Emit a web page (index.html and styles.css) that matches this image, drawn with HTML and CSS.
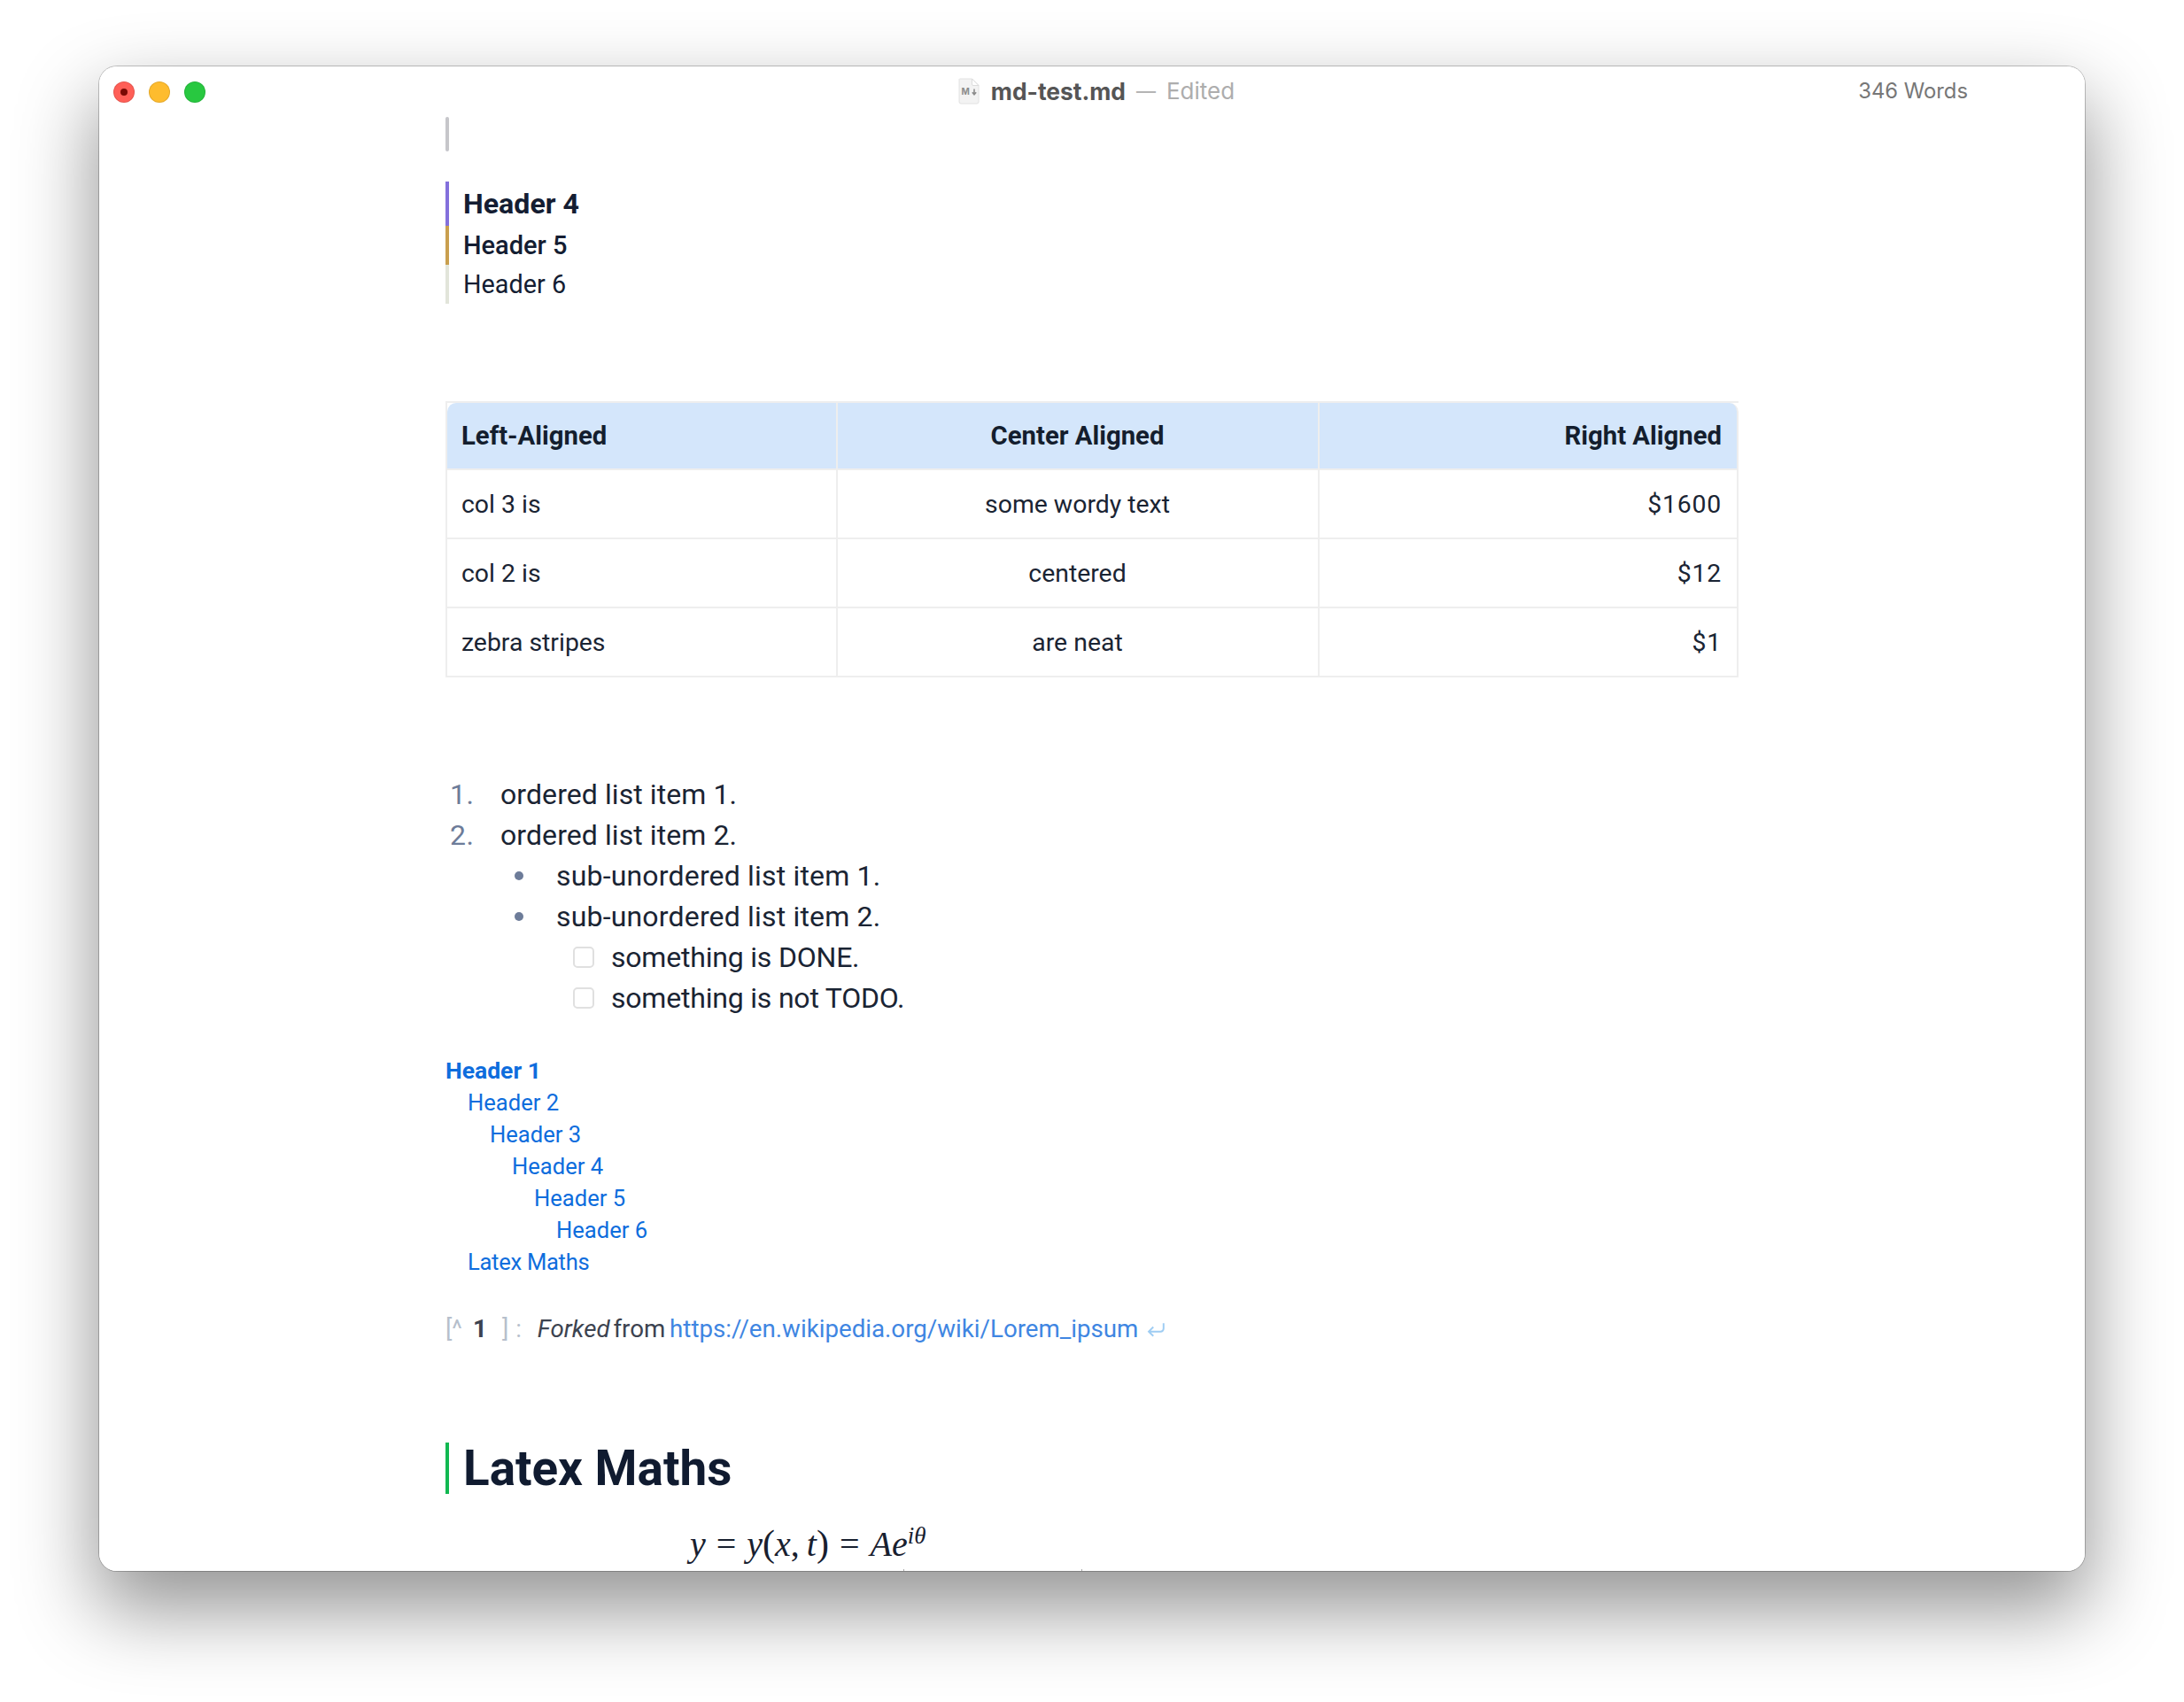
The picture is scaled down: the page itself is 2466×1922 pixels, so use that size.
FILE: index.html
```html
<!DOCTYPE html>
<html lang="en">
<head>
<meta charset="utf-8">
<title>md-test.md</title>
<link rel="stylesheet" href="styles.css">
</head>
<body>
<main class="window">
  <header class="titlebar">
    <div class="lights">
      <span class="light red"><span class="dot"></span></span>
      <span class="light yellow"></span>
      <span class="light green"></span>
    </div>
    <div class="title">
      <svg class="file-icon" width="24" height="30" viewBox="0 0 24 30" aria-hidden="true">
        <path d="M1.5 1h14l7.5 7.5V27a2 2 0 0 1-2 2H3a2 2 0 0 1-2-2V1.500z" fill="#f3f3f3" stroke="#e2e2e2"/>
        <path d="M15.500 1v6a1.500 1.500 0 0 0 1.500 1.500h6z" fill="#fff" stroke="#dcdcdc"/>
        <text x="3.500" y="19" class="file-mark">M</text>
        <path d="M18 12.500v6M15.800 16.300l2.200 2.400 2.200-2.400" fill="none" stroke="#8c8c8c" stroke-width="1.600"/>
      </svg>
      <strong class="name">md-test.md</strong>
      <span class="sep">—</span>
      <span class="state">Edited</span>
    </div>
    <div class="words">346 Words</div>
  </header>

  <article class="doc">
    <div class="cursor-bar"></div>

    <section class="heads">
      <h4 class="h4">Header 4</h4>
      <h5 class="h5">Header 5</h5>
      <h6 class="h6">Header 6</h6>
    </section>

    <table class="table">
      <colgroup><col class="c1"><col class="c2"><col class="c3"></colgroup>
      <thead>
        <tr><th class="l">Left-Aligned</th><th class="m">Center Aligned</th><th class="r">Right Aligned</th></tr>
      </thead>
      <tbody>
        <tr><td class="l">col 3 is</td><td class="m">some wordy text</td><td class="r">$1600</td></tr>
        <tr><td class="l">col 2 is</td><td class="m">centered</td><td class="r">$12</td></tr>
        <tr><td class="l">zebra stripes</td><td class="m">are neat</td><td class="r">$1</td></tr>
      </tbody>
    </table>

    <ol class="ol">
      <li><span class="num">1.</span>ordered list item 1.</li>
      <li><span class="num">2.</span>ordered list item 2.
        <ul class="ul">
          <li><span class="bullet"></span>sub-unordered list item 1.</li>
          <li><span class="bullet"></span>sub-unordered list item 2.
            <ul class="tasks">
              <li><span class="box"></span>something is DONE.</li>
              <li><span class="box"></span>something is not TODO.</li>
            </ul>
          </li>
        </ul>
      </li>
    </ol>

    <nav class="toc">
      <a class="t0">Header 1</a>
      <a class="t1">Header 2</a>
      <a class="t2">Header 3</a>
      <a class="t3">Header 4</a>
      <a class="t4">Header 5</a>
      <a class="t5">Header 6</a>
      <a class="t1 latex">Latex Maths</a>
    </nav>

    <p class="footnote">
      <span class="fn-br">[^</span><b class="fn-num">1</b><span class="fn-br fn-close">]</span><span class="fn-br fn-colon">:</span>
      <em>Forked</em> from <a class="fn-link">https://en.wikipedia.org/wiki/Lorem_ipsum</a>
      <svg class="fn-back" width="20" height="18" viewBox="0 0 20 18" aria-hidden="true"><path d="M18 2v5.500a3 3 0 0 1-3 3H3M7.500 5.800 2.800 10.500l4.700 4.700" fill="none" stroke="#9fcdf3" stroke-width="1.800"/></svg>
    </p>

    <h2 class="h2">Latex Maths</h2>

    <div class="math"><i>y</i><span class="eq">=</span><i>y</i><span class="paren">(</span><i>x</i>,<i class="t">t</i><span class="paren">)</span><span class="eq">=</span><i>Ae</i><sup><i>iθ</i></sup></div>
  </article>
  <span class="tick tick-a"></span>
  <span class="tick tick-b"></span>
</main>
</body>
</html>
```
FILE: styles.css
```css
* { box-sizing: border-box; }
html, body { margin: 0; padding: 0; background: #fff; }
body { height: 1922px; overflow: hidden; padding: 75px 0 0 112px; font-family: "Roboto", "Liberation Sans", sans-serif; color: #18202f; }

.window { position: relative; width: 2242px; height: 1699px; background: #fff; border-radius: 20px; overflow: hidden; }
body::before { content: ""; position: absolute; left: 112px; top: 75px; width: 2242px; height: 1699px; border-radius: 20px; box-shadow: 0 0 0 1px rgba(0,0,0,.22), 0 40px 88px 4px rgba(0,0,0,.42); }

.titlebar { height: 57px; display: grid; grid-template-columns: 1fr auto 1fr; align-items: center; padding: 0 0 0 16px; font-family: "Inter", sans-serif; }
.lights { display: flex; gap: 16px; }
.light { width: 24px; height: 24px; border-radius: 50%; display: flex; align-items: center; justify-content: center; border: 1px solid rgba(0,0,0,.1); }
.red { background: #ff5f57; }
.yellow { background: #febc2e; }
.green { background: #28c840; }
.dot { width: 8px; height: 8px; border-radius: 50%; background: #7a0a04; }
.title { display: flex; align-items: center; font-size: 26px; transform: translate(-3px, -1px); }
.file-icon { margin-right: 13px; }
.file-mark { font: 700 10px "Inter", sans-serif; fill: #8c8c8c; }
.name { color: #555; font-weight: 700; font-size: 26.4px; }
.sep { color: #b4b4b4; margin: 0 12px; font-size: 22px; font-weight: 500; }
.state { color: #adadad; font-weight: 400; }
.words { justify-self: end; margin-right: 132px; font-size: 23.8px; color: #777; transform: translateY(-1px); }

.doc { width: 1851px; padding-left: 391px; }
.cursor-bar { width: 4px; height: 39px; background: #c6c6ca; border-radius: 2px; }

.heads { margin-top: 34px; }
.heads h4, .heads h5, .heads h6 { margin: 0; padding-left: 16px; border-left: 4px solid; display: flex; align-items: center; color: #141d32; }
.h4 { height: 50px; font-size: 32.2px; font-weight: 700; border-color: #8370dc !important; }
.h5 { height: 44px; font-size: 29px; font-weight: 500; border-color: #c99f4e !important; }
.h6 { height: 44px; font-size: 28.8px; font-weight: 400; border-color: #e2e5da !important; padding-bottom: 0; }

.table { margin-top: 110px; width: 1460px; table-layout: fixed; border-collapse: separate; border-spacing: 0; border-top: 2px solid #eeeeee; border-left: 2px solid #eeeeee; font-size: 28.4px; }
.c1 { width: 441px; }
.c2 { width: 544px; }
.c3 { width: 473px; }
.table th, .table td { height: 78px; padding: 0 17px 0 16px; border-right: 2px solid #eeeeee; border-bottom: 2px solid #eeeeee; color: #1a2433; }
.table th { height: 76px; background: #d4e6fb; font-size: 29.3px; font-weight: 700; color: #141e2e; }
.table th:first-child { border-top-left-radius: 10px; }
.table th:last-child { border-top-right-radius: 10px; }
.table td.r { letter-spacing: .8px; }
.l { text-align: left; }
.m { text-align: center; }
.r { text-align: right; }

.ol, .ul, .tasks { list-style: none; margin: 0; padding: 0; }
.ol { margin-top: 109px; font-size: 32px; line-height: 46px; color: #1a2433; letter-spacing: .08px; }
.ol > li { position: relative; padding-left: 62px; }
.num { position: absolute; left: 5px; color: #6d7c99; letter-spacing: .5px; }
.ul { letter-spacing: .18px; }
.ul > li { position: relative; padding-left: 63px; }
.bullet { position: absolute; left: 16px; top: 18px; width: 10px; height: 10px; border-radius: 50%; background: #6d7c99; }
.tasks { letter-spacing: -.2px; }
.tasks > li { position: relative; padding-left: 62px; }
.box { position: absolute; left: 19px; top: 11px; width: 24px; height: 24px; border: 2px solid #e0e0e0; border-radius: 5px; background: #fff; }

.toc { margin-top: 41px; display: flex; flex-direction: column; font-size: 25.6px; line-height: 36px; }
.toc a { color: #0e6ddd; }
.t0 { font-weight: 700; font-size: 26.5px; }
.t1 { padding-left: 25px; }
.t2 { padding-left: 50px; }
.t3 { padding-left: 75px; }
.t4 { padding-left: 100px; }
.t5 { padding-left: 125px; }
.latex { letter-spacing: -.3px; }

.footnote { margin: 38px 0 0; height: 40px; line-height: 40px; font-size: 27.7px; color: #3c4350; white-space: nowrap; display: block; }
.fn-br { color: #b6bfcc; }
.fn-num { display: inline-block; margin-left: 12px; width: 33px; font-weight: 700; color: #3c4350; }
.fn-colon { margin-left: 8px; margin-right: 11px; }
.footnote em { color: #3c4350; margin-right: -3px; }
.fn-link { color: #3f86e2; margin-left: -2px; }
.fn-back { vertical-align: -2px; margin-left: 2px; width: 22px; height: 20px; }

.h2 { margin: 108px 0 0; height: 58px; padding-left: 16px; border-left: 4px solid #11b851; font-size: 54.8px; line-height: 58px; font-weight: 700; color: #101b30; }

.math { margin-top: 36px; padding-left: 276px; height: 40px; line-height: 40px; font-family: "Liberation Serif", serif; font-size: 40px; color: #18202f; white-space: nowrap; }
.math i { font-style: italic; }
.eq { margin: 0 12px; }
.paren { font-size: 42px; }
.t { margin-left: 8px; }
.math sup { font-size: 27px; line-height: 0; vertical-align: 14px; }

.tick { position: absolute; bottom: 0; width: 1px; height: 2px; background: #aaa; }
.tick-a { left: 908px; }
.tick-b { left: 1109px; }
```
